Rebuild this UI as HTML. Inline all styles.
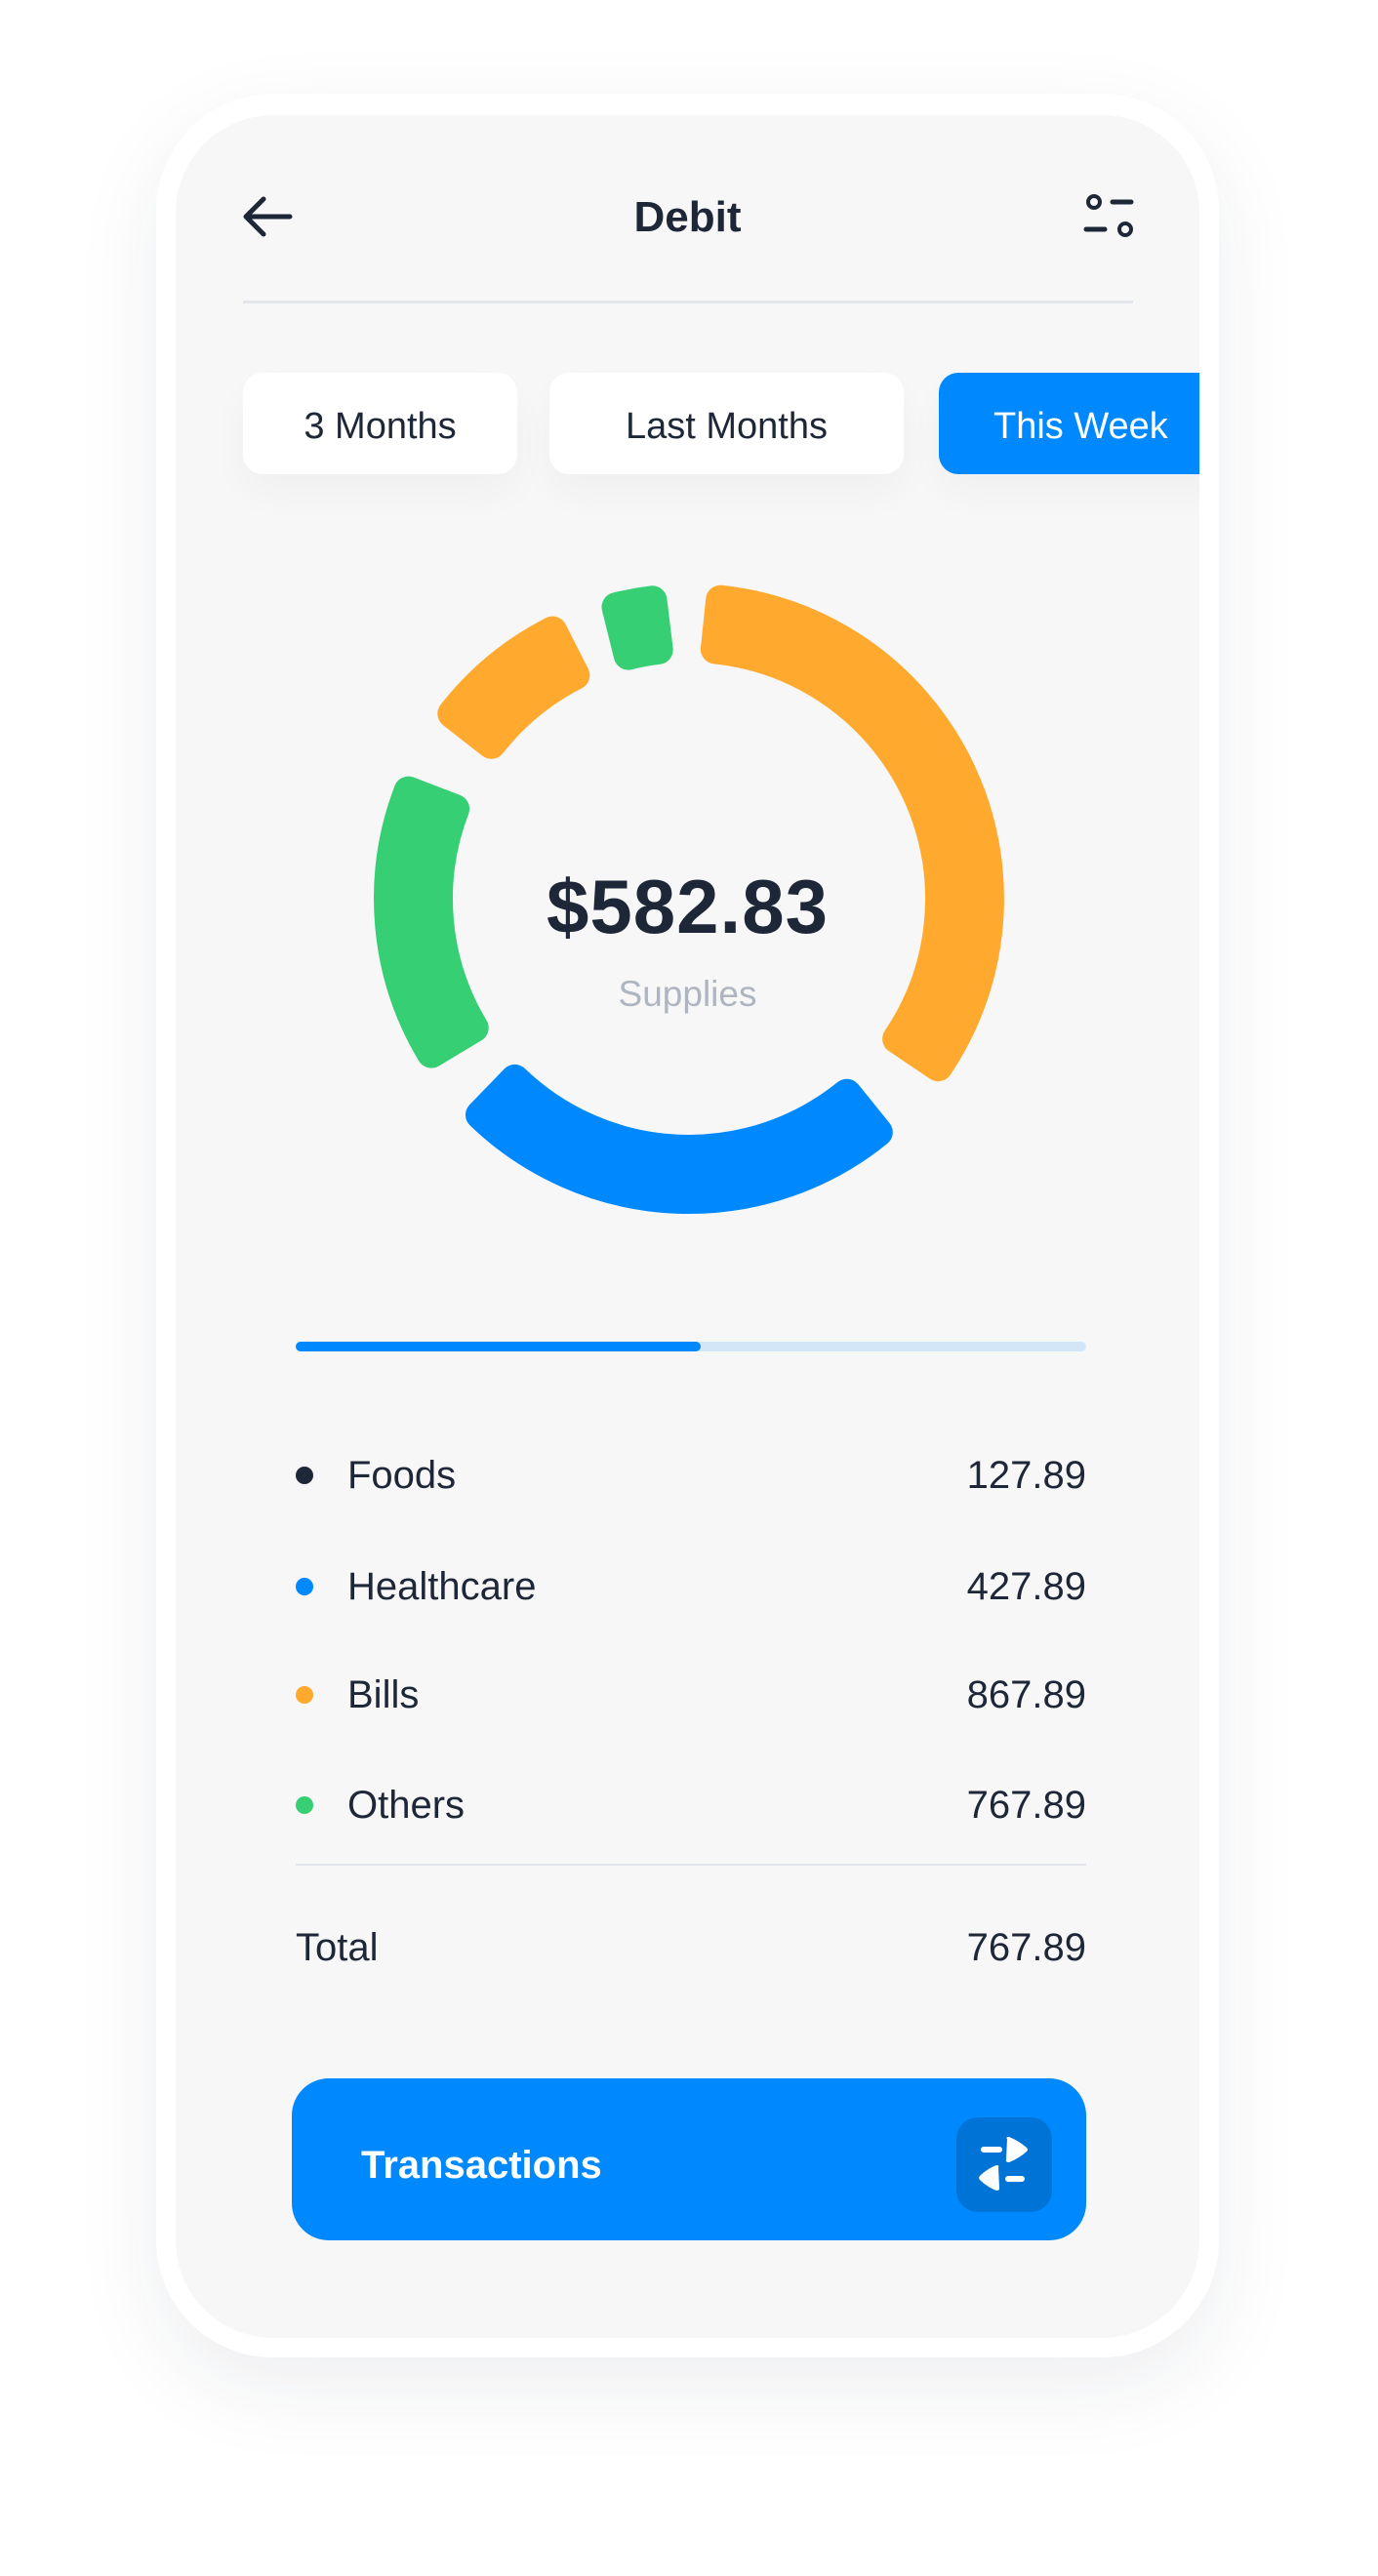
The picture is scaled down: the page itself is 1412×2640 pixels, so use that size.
<!DOCTYPE html>
<html><head><meta charset="utf-8">
<style>
*{margin:0;padding:0;box-sizing:border-box}
body{width:1412px;height:2640px;background:#fff;font-family:"Liberation Sans",sans-serif;position:relative;overflow:hidden;color:#1e2738}
.frame{position:absolute;left:160px;top:96px;width:1089px;height:2320px;border-radius:120px;background:#fff;box-shadow:0 30px 90px rgba(30,40,60,0.08)}
.screen{position:absolute;left:180px;top:118px;width:1049px;height:2278px;border-radius:100px;background:#f7f7f8;overflow:hidden}
.abs{position:absolute}
.tab{position:absolute;top:264px;height:104px;border-radius:20px;background:#fff;font-size:38px;display:flex;align-items:center;justify-content:center;padding-top:6px;box-shadow:0 20px 40px rgba(0,0,0,0.03)}
.row{position:absolute;left:123px;width:810px;font-size:40px;height:50px;line-height:50px}
.row .dot{position:absolute;left:0;top:16px;width:18px;height:18px;border-radius:50%}
.row .lbl{position:absolute;left:53px}
.row .val{position:absolute;right:0}
</style></head><body>
<div class="frame"></div>
<div class="screen">
  <svg class="abs" style="left:68px;top:82px" width="52" height="44" viewBox="0 0 52 44"><path d="M49 22H5M22 4L4 22L22 40" fill="none" stroke="#1e2738" stroke-width="5" stroke-linecap="round" stroke-linejoin="round"/></svg>
  <div class="abs" style="left:0;width:1049px;top:80px;text-align:center;font-size:44px;font-weight:bold">Debit</div>
  <svg class="abs" style="left:928px;top:78px" width="56" height="50" viewBox="0 0 56 50"><circle cx="13" cy="11" r="6" fill="none" stroke="#1e2738" stroke-width="4"/><path d="M32 11H51M5 39H24" stroke="#1e2738" stroke-width="5" stroke-linecap="round"/><circle cx="45" cy="39" r="6" fill="none" stroke="#1e2738" stroke-width="4"/></svg>
  <div class="abs" style="left:69px;top:190px;width:912px;height:3px;background:#e2e5e9"></div>
  <div class="tab" style="left:69px;width:281px">3 Months</div>
  <div class="tab" style="left:383px;width:363px">Last Months</div>
  <div class="tab" style="left:782px;width:300px;background:#0089ff;color:#fff;justify-content:flex-start;padding-left:56px;border-radius:20px 0 0 20px">This Week</div>

  <svg class="abs" style="left:0;top:0" width="1049" height="1400" id="donut"></svg>
  <div class="abs" style="left:0;width:1049px;top:766px;text-align:center;font-size:78px;font-weight:bold;letter-spacing:1px">$582.83</div>
  <div class="abs" style="left:0;width:1049px;top:880px;text-align:center;font-size:37px;color:#aeb5c0">Supplies</div>

  <div class="abs" style="left:123px;top:1257px;width:810px;height:10px;border-radius:5px;background:#d3e6f7"></div>
  <div class="abs" style="left:123px;top:1257px;width:415px;height:10px;border-radius:5px;background:#0089ff"></div>

  <div class="row" style="top:1369px"><span class="dot" style="background:#1e2738"></span><span class="lbl">Foods</span><span class="val">127.89</span></div>
  <div class="row" style="top:1483px"><span class="dot" style="background:#0089ff"></span><span class="lbl">Healthcare</span><span class="val">427.89</span></div>
  <div class="row" style="top:1594px"><span class="dot" style="background:#ffaa2f"></span><span class="lbl">Bills</span><span class="val">867.89</span></div>
  <div class="row" style="top:1707px"><span class="dot" style="background:#37cf74"></span><span class="lbl">Others</span><span class="val">767.89</span></div>
  <div class="abs" style="left:123px;top:1792px;width:810px;height:2px;background:#e2e5e9"></div>
  <div class="row" style="top:1853px"><span class="lbl" style="left:0">Total</span><span class="val">767.89</span></div>

  <div class="abs" style="left:119px;top:2012px;width:814px;height:166px;border-radius:38px;background:#0089ff"></div>
  <div class="abs" style="left:190px;top:2079px;font-size:40px;font-weight:bold;color:#fff">Transactions</div>
  <div class="abs" style="left:800px;top:2052px;width:98px;height:97px;border-radius:22px;background:#0073d6">
    <svg width="98" height="97" viewBox="0 0 98 97"><path d="M28 33H44M53 63H67" stroke="#fff" stroke-width="6" stroke-linecap="round"/><path d="M52 22Q50 20 54 20Q64 24 72 31Q74 33 72 35Q64 42 54 46Q50 46 51 43Z" fill="#fff"/><path d="M43 51Q44 49 41 49Q31 53 24 60Q22 62 24 64Q31 71 41 75Q44 75 44 73Z" fill="#fff"/></svg>
  </div>
</div>
<script>
var cx=526,cy=803,ro=308,ri=257,ins=3;
var segs=[[3,127,'#ffaa2f'],[138,227,'#0089ff'],[236,294,'#37cf74'],[305,336,'#ffaa2f'],[343,356,'#37cf74']];
function p(r,a){a=a*Math.PI/180;return (cx+r*Math.sin(a)).toFixed(1)+' '+(cy-r*Math.cos(a)).toFixed(1);}
var s='';
segs.forEach(function(g){var a1=g[0]+ins,a2=g[1]-ins,l=(a2-a1)>180?1:0;
s+='<path d="M'+p(ro,a1)+' A'+ro+' '+ro+' 0 '+l+' 1 '+p(ro,a2)+' L'+p(ri,a2)+' A'+ri+' '+ri+' 0 '+l+' 0 '+p(ri,a1)+' Z" fill="'+g[2]+'" stroke="'+g[2]+'" stroke-width="30" stroke-linejoin="round"/>';});
document.getElementById('donut').innerHTML=s;
</script>
</body></html>
